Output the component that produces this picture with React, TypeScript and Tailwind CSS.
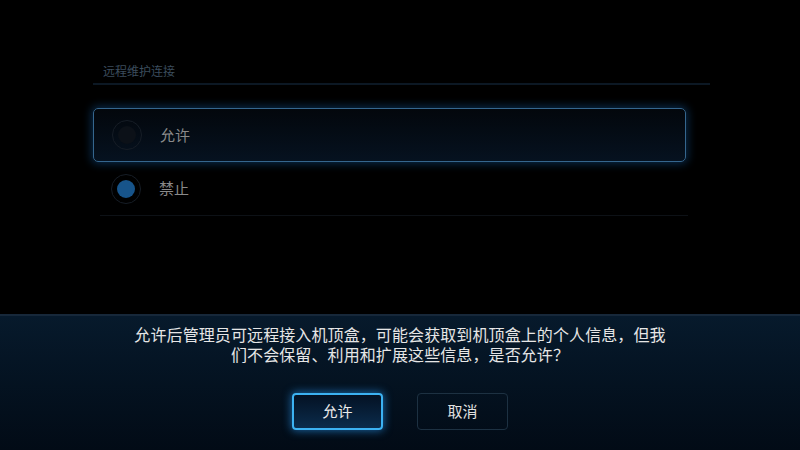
const font = { fontFamily: '"Noto Sans CJK SC", "Noto Sans", sans-serif' };
const msgFont = { fontFamily: '"Liberation Sans", "Noto Sans CJK SC", sans-serif' };

function Radio({ checked }: { checked: boolean }) {
  return (
    <div className="flex h-[30px] w-[30px] items-center justify-center rounded-full border border-[#161d26]">
      <div
        className={`h-[18px] w-[18px] rounded-full ${
          checked ? "bg-[#17548a]" : "bg-[#0c1118]"
        }`}
      />
    </div>
  );
}

export default function App() {
  return (
    <div className="flex h-[450px] w-[800px] flex-col overflow-hidden bg-black" style={font}>
      {/* settings list */}
      <div className="flex-1 px-[93px] pt-[62px]">
        <div className="pl-[10px] text-[12px] leading-[18px] text-[#3b4c5c]">远程维护连接</div>
        <div className="mt-[3px] h-[2px] w-[617px] bg-[#0c1824]" />

        <div className="mt-[23px] w-[593px]">
          <div className="flex h-[54px] items-center rounded-[5px] border border-[#35668e] bg-gradient-to-b from-[#03070c] to-[#061220] pl-[18px] shadow-[0_0_8px_2px_rgba(20,90,160,0.45)]">
            <Radio checked={false} />
            <span className="ml-[18px] text-[15px] text-[#8a8a8a]">允许</span>
          </div>
          <div className="flex h-[53px] items-center pl-[18px]">
            <Radio checked={true} />
            <span className="ml-[18px] text-[15px] text-[#8a8a8a]">禁止</span>
          </div>
          <div className="ml-[7px] h-px w-[588px] bg-[#0d1116]" />
        </div>
      </div>

      {/* confirm dialog */}
      <div className="h-[136px] border-t-2 border-[#17283a] bg-gradient-to-b from-[#071a2c] to-[#020b16]">
        <div
          className="pt-[10px] text-center text-[16px] leading-[20px] tracking-[0.1px] text-[#e6e6e6]"
          style={msgFont}
        >
          <p>允许后管理员可远程接入机顶盒，可能会获取到机顶盒上的个人信息，但我</p>
          <p>们不会保留、利用和扩展这些信息，是否允许？</p>
        </div>
        <div className="mt-[27px] flex justify-center gap-[34px]">
          <button className="h-[37px] w-[91px] rounded-[4px] border-2 border-[#3cb2f2] bg-gradient-to-b from-[#041224] to-[#0b2c4c] text-[15px] text-[#eaeaea] shadow-[0_0_8px_1px_rgba(40,150,240,0.6)]">
            允许
          </button>
          <button className="h-[37px] w-[91px] rounded-[4px] border border-[#1d3142] text-[15px] text-[#e0e0e0]">
            取消
          </button>
        </div>
      </div>
    </div>
  );
}
